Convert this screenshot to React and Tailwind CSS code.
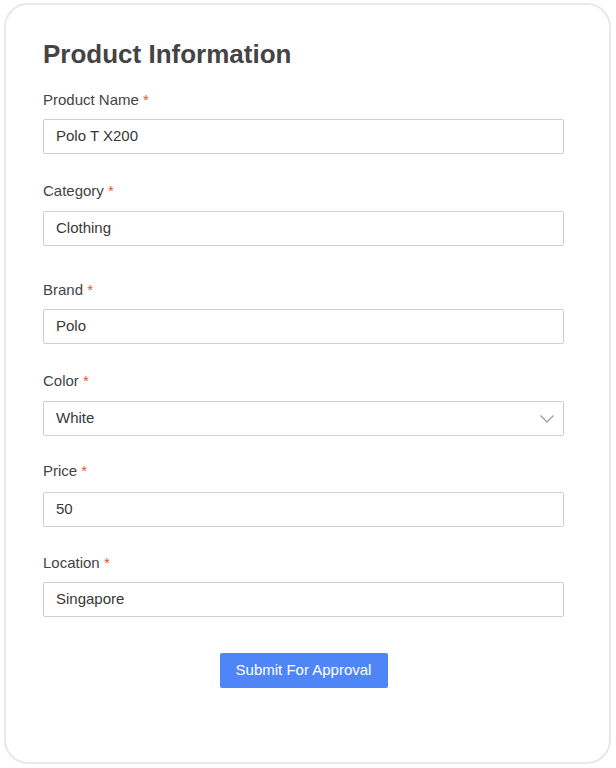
import React from 'react';

// spacing is uneven in the design, so each row carries its own margins
const fields = [
    { label: 'Product Name', value: 'Polo T X200', gap: 'mt-[21px]', inGap: 'mt-[9px]' },
    { label: 'Category', value: 'Clothing', gap: 'mt-[27px]', inGap: 'mt-[10px]' },
    { label: 'Brand', value: 'Polo', gap: 'mt-[34px]', inGap: 'mt-[9px]' },
    { label: 'Color', value: 'White', gap: 'mt-[27px]', inGap: 'mt-[10px]', select: true },
    { label: 'Price', value: '50', gap: 'mt-[25px]', inGap: 'mt-[11px]' },
    { label: 'Location', value: 'Singapore', gap: 'mt-[26px]', inGap: 'mt-[9px]' },
];

const Field = ({ label, value, gap, inGap, select }) => (
    <div className={gap}>
        <label className="block text-[15px] leading-[20px] text-[#444]">
            {label} <span className="text-[#e4572e]">*</span>
        </label>
        <div className={`${inGap} w-[521px] h-[35px] border border-[#cfcfcf] rounded-[2px] bg-white flex items-center justify-between pl-[12px] pr-[8px]`}>
            <span className="text-[15px] text-[#383838]">{value}</span>
            {select && (
                <svg width="16" height="16" viewBox="0 0 16 16" fill="none" stroke="#999" strokeWidth="1.2">
                    <path d="M1.5 4.5 L8 11 L14.5 4.5" />
                </svg>
            )}
        </div>
    </div>
);

export default function App() {
    return (
        <div className="w-[616px] h-[768px] bg-white pt-[3px] pl-[4px]" style={{ fontFamily: '"Liberation Sans", Arial, sans-serif' }}>
            <div className="w-[607px] h-[761px] border-2 border-[#e8e8e8] rounded-[24px] pt-[34px] pl-[37px]">
                <h1 className="text-[26px] leading-[30px] font-bold text-[#444]">Product Information</h1>
                {fields.map((f) => (
                    <Field key={f.label} {...f} />
                ))}
                <div className="w-[521px] flex justify-center mt-[36px]">
                    <button className="w-[168px] h-[35px] bg-[#4f86f7] text-white text-[15px] rounded-[2px]">
                        Submit For Approval
                    </button>
                </div>
            </div>
        </div>
    );
}
